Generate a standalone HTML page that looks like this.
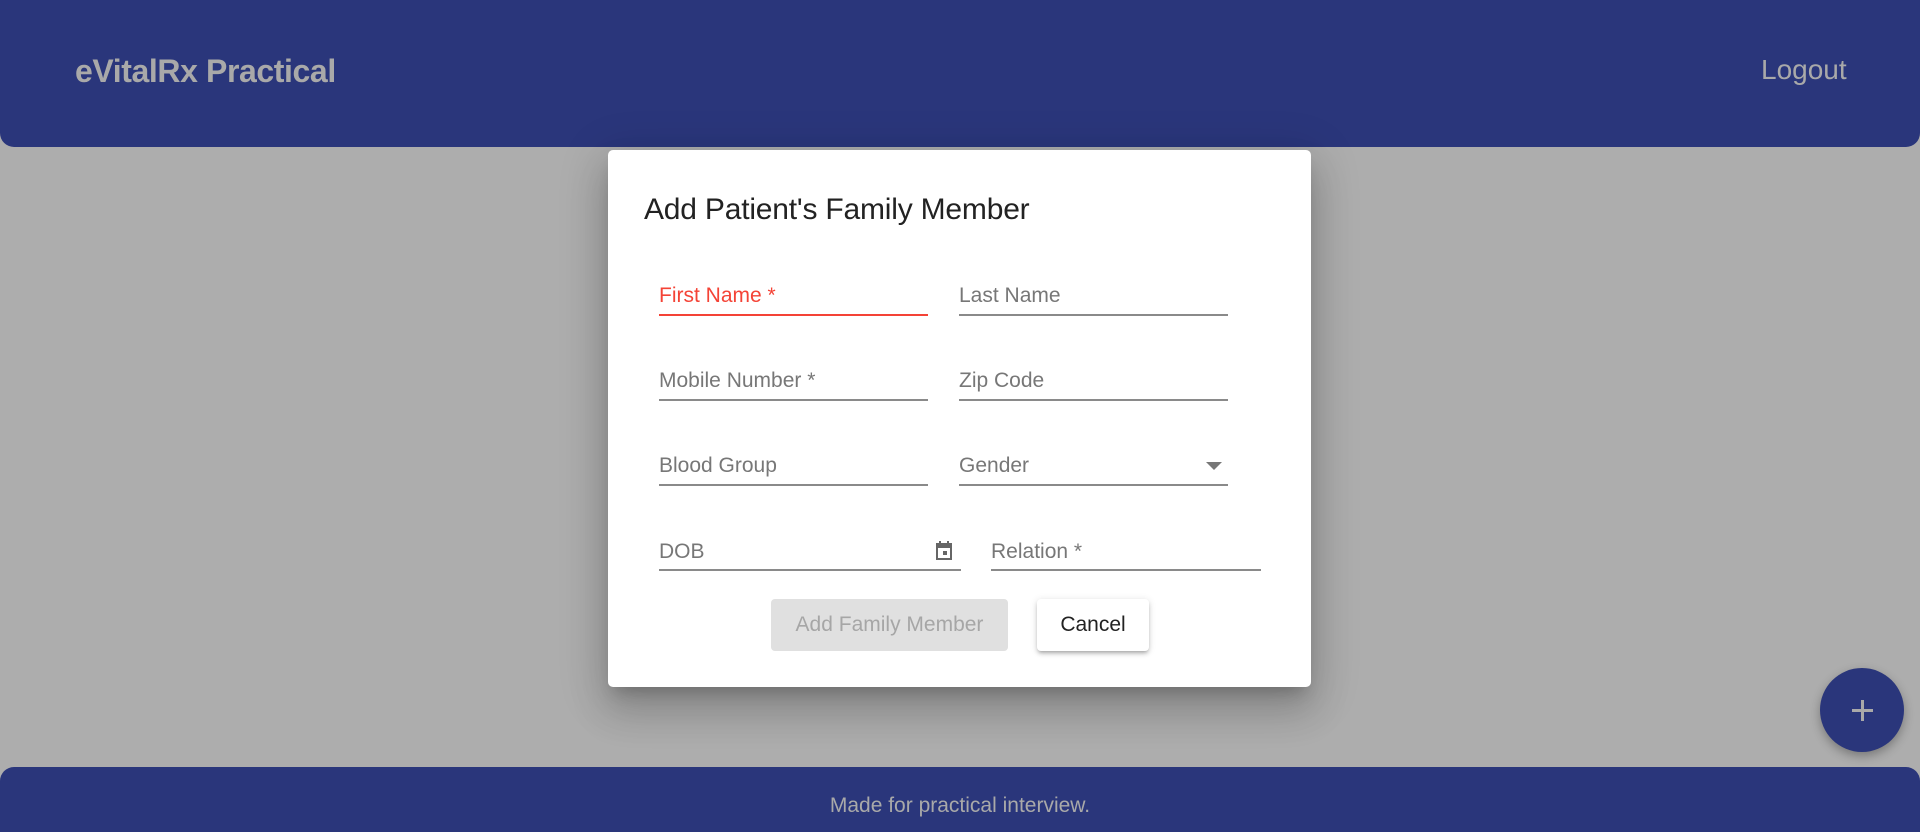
<!DOCTYPE html>
<html style="width:1920px;height:832px;overflow:hidden"><head><meta charset="utf-8"><style>
*{box-sizing:border-box;margin:0;padding:0}
body{width:1920px;height:832px;overflow:hidden;background:#adadad;font-family:"Liberation Sans",sans-serif;position:relative}
.hdr{position:absolute;left:0;top:0;width:1920px;height:147px;background:#2a367b;border-radius:0 0 14px 14px}
.brand{position:absolute;left:75px;top:53px;font-size:32px;font-weight:bold;color:#a9a9a9;letter-spacing:-0.4px}
.logout{position:absolute;left:1761px;top:54px;font-size:28px;color:#a9a9a9}
.ftr{position:absolute;left:0;top:767px;width:1920px;height:65px;background:#2a367b;border-radius:14px 14px 0 0}
.ftr span{position:absolute;left:0;width:1920px;text-align:center;top:27px;font-size:21px;color:#a9a9a9}
.fab{position:absolute;left:1820px;top:668px;width:84px;height:84px;border-radius:50%;background:#2a367b;box-shadow:0 4px 10px rgba(0,0,0,.3)}
.fab:before,.fab:after{content:"";position:absolute;background:#a9a9a9;left:32px;top:41px;width:21px;height:3px}
.fab:after{left:41px;top:32px;width:3px;height:21px}
.dlg{position:absolute;left:608px;top:150px;width:703px;height:537px;background:#fff;border-radius:5px;box-shadow:0 11px 15px -7px rgba(0,0,0,.2),0 24px 38px 3px rgba(0,0,0,.14),0 9px 46px 8px rgba(0,0,0,.12)}
.title{position:absolute;left:36px;top:43px;font-size:30px;color:#222;letter-spacing:-0.2px}
.f{position:absolute;height:2px;border-bottom:2px solid #8a8a8a}
.l{position:absolute;font-size:21px;color:#777}
.btn1{position:absolute;left:163px;top:449px;width:237px;height:52px;background:#e0e0e0;border-radius:4px;color:#a6a6a6;font-size:21px;text-align:center;line-height:52px}
.btn2{position:absolute;left:429px;top:449px;width:112px;height:52px;background:#fff;border-radius:4px;color:#222;font-size:21px;text-align:center;line-height:52px;box-shadow:0 3px 3px -2px rgba(0,0,0,.2),0 3px 4px rgba(0,0,0,.14),0 1px 8px rgba(0,0,0,.12)}
</style></head><body>
<div class="hdr"><div class="brand">eVitalRx Practical</div><div class="logout">Logout</div></div>
<div class="dlg">
<div class="title">Add Patient's Family Member</div>
<div class="l" style="left:51px;top:134px;color:#f44336">First Name *</div>
<div class="f" style="left:51px;top:164px;width:269px;border-color:#f44336"></div>
<div class="l" style="left:351px;top:134px">Last Name</div>
<div class="f" style="left:351px;top:164px;width:269px"></div>
<div class="l" style="left:51px;top:219px">Mobile Number *</div>
<div class="f" style="left:51px;top:249px;width:269px"></div>
<div class="l" style="left:351px;top:219px">Zip Code</div>
<div class="f" style="left:351px;top:249px;width:269px"></div>
<div class="l" style="left:51px;top:304px">Blood Group</div>
<div class="l" style="left:351px;top:304px">Gender</div>
<div class="f" style="left:51px;top:334px;width:269px"></div>
<svg style="position:absolute;left:598px;top:311px" width="16" height="10"><path d="M0 1h16L8 9z" fill="#777"/></svg>
<div class="f" style="left:351px;top:334px;width:269px"></div>
<div class="l" style="left:51px;top:390px">DOB</div>
<svg style="position:absolute;left:327px;top:390px" width="18" height="20" viewBox="0 0 18 20"><path d="M2 4h14v15H2z" fill="none" stroke="#666" stroke-width="2"/><path d="M2 4h14v4H2z" fill="#666"/><rect x="4" y="1" width="2" height="4" fill="#666"/><rect x="12" y="1" width="2" height="4" fill="#666"/><rect x="8" y="11" width="4" height="4" fill="#666"/></svg>
<div class="f" style="left:51px;top:419px;width:302px"></div>
<div class="l" style="left:383px;top:390px">Relation *</div>
<div class="f" style="left:383px;top:419px;width:270px"></div>
<div class="btn1">Add Family Member</div>
<div class="btn2">Cancel</div>
</div>
<div class="fab"></div>
<div class="ftr"><span>Made for practical interview.</span></div>
</body></html>
